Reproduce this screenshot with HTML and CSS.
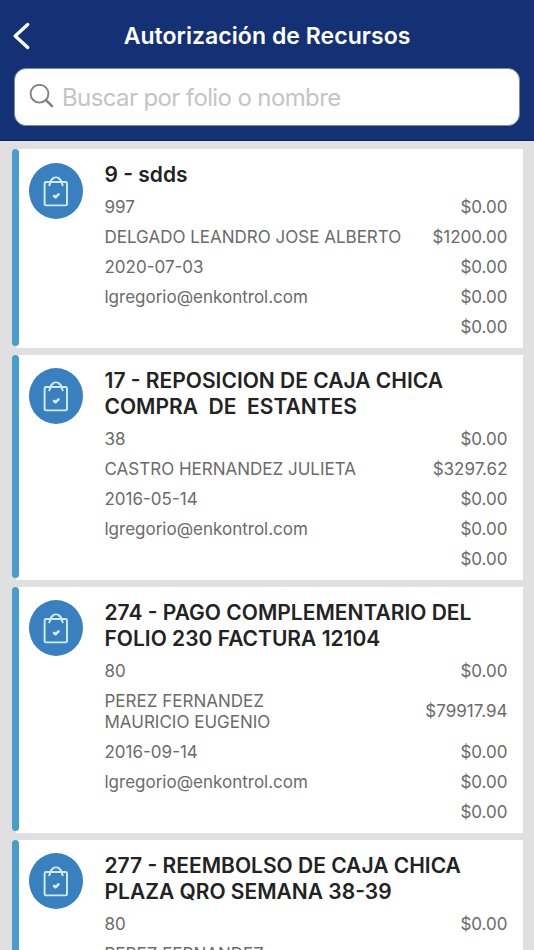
FILE: index.html
```html
<!DOCTYPE html>
<html lang="es">
<head>
    <meta charset="UTF-8">
    <meta name="viewport" content="width=device-width, initial-scale=1.0">
    <title>Autorización de Recursos</title>
    <link rel="stylesheet" href="styles.css">
</head>
<body>
    <svg class="sprite" width="0" height="0">
        <symbol id="bag" viewBox="0 0 54 56">
            <ellipse cx="27" cy="28" rx="27" ry="28" fill="#3880c0"/>
            <g fill="none" stroke="#d3ecfb" stroke-width="1.9" stroke-linejoin="round" stroke-linecap="round">
                <rect x="15.6" y="19" width="22.4" height="23.4" rx="1.5"/>
                <path d="M20.3 22.3l1.7-4.6q.5-1.3 1.7-1.7c.5-2.2 6.1-2.2 6.600 0q1.200.4 1.700 1.700l1.700 4.600"/>
                <path d="M25 33l1.500 1.300 3-3" stroke-width="2.600"/>
            </g>
        </symbol>
    </svg>

    <header class="header">
        <div class="navbar">
            <svg class="back" width="18" height="30" viewBox="0 0 18 30">
                <path d="M14.700 3.500L2.200 15l12.500 11.500" fill="none" stroke="#fff" stroke-width="3.300" stroke-linecap="round" stroke-linejoin="round"/>
            </svg>
            <h1>Autorización de Recursos</h1>
        </div>
        <label class="search">
            <svg width="26" height="26" viewBox="0 0 26 26" fill="none" stroke="#808285">
                <circle cx="10.500" cy="9.700" r="8.900" stroke-width="1.900"/>
                <path d="M17 16.200l6 6" stroke-width="2.600" stroke-linecap="round"/>
            </svg>
            <input type="text" placeholder="Buscar por folio o nombre">
        </label>
    </header>

    <main class="list">
        <article class="card">
            <svg class="icon"><use href="#bag"/></svg>
            <div class="info">
                <h2>9 - sdds</h2>
                <div class="row"><span>997</span><span>$0.00</span></div>
                <div class="row"><span>DELGADO LEANDRO JOSE ALBERTO</span><span>$1200.00</span></div>
                <div class="row"><span>2020-07-03</span><span>$0.00</span></div>
                <div class="row"><span>lgregorio@enkontrol.com</span><span>$0.00</span></div>
                <div class="row"><span></span><span>$0.00</span></div>
            </div>
        </article>
        <article class="card">
            <svg class="icon"><use href="#bag"/></svg>
            <div class="info">
                <h2>17 - REPOSICION DE CAJA CHICA
COMPRA  DE  ESTANTES</h2>
                <div class="row"><span>38</span><span>$0.00</span></div>
                <div class="row"><span>CASTRO HERNANDEZ JULIETA</span><span>$3297.62</span></div>
                <div class="row"><span>2016-05-14</span><span>$0.00</span></div>
                <div class="row"><span>lgregorio@enkontrol.com</span><span>$0.00</span></div>
                <div class="row"><span></span><span>$0.00</span></div>
            </div>
        </article>
        <article class="card">
            <svg class="icon"><use href="#bag"/></svg>
            <div class="info">
                <h2>274 - PAGO COMPLEMENTARIO DEL
FOLIO 230 FACTURA 12104</h2>
                <div class="row"><span>80</span><span>$0.00</span></div>
                <div class="row"><span>PEREZ FERNANDEZ<br>MAURICIO EUGENIO</span><span>$79917.94</span></div>
                <div class="row"><span>2016-09-14</span><span>$0.00</span></div>
                <div class="row"><span>lgregorio@enkontrol.com</span><span>$0.00</span></div>
                <div class="row"><span></span><span>$0.00</span></div>
            </div>
        </article>
        <article class="card">
            <svg class="icon"><use href="#bag"/></svg>
            <div class="info">
                <h2>277 - REEMBOLSO DE CAJA CHICA
PLAZA QRO SEMANA 38-39</h2>
                <div class="row"><span>80</span><span>$0.00</span></div>
                <div class="row"><span>PEREZ FERNANDEZ</span></div>
            </div>
        </article>
    </main>
</body>
</html>
```
FILE: styles.css
```css
* {
    box-sizing: border-box;
}
body {
    margin: 0;
    height: 950px;
    overflow: hidden;
    background: #e0e0e0;
    font-family: Inter, "Liberation Sans", sans-serif;
}
.sprite {
    display: block;
}
.header {
    height: 141px;
    padding: 0 14px;
    background: #133174;
    border-bottom: 1px solid #10205f;
}
.navbar {
    display: grid;
    grid-template-columns: 18px 1fr 18px;
    align-items: center;
    height: 68px;
    padding-top: 4px;
}
.back {
    margin-left: -1px;
}
h1 {
    margin: 0;
    text-align: center;
    color: #fff;
    font-size: 23px;
    font-weight: 600;
    letter-spacing: 0.05px;
}
.search {
    display: flex;
    align-items: center;
    gap: 7px;
    height: 58px;
    padding: 0 14px;
    background: #fff;
    border: 1px solid #8087a0;
    border-radius: 12px;
}
.search input {
    flex: 1;
    min-width: 0;
    padding: 0;
    border: 0;
    outline: 0;
    font-family: inherit;
    font-size: 24px;
    letter-spacing: -0.62px;
}
.search input::placeholder {
    color: #c4c4c6;
}
.list {
    display: flex;
    flex-direction: column;
    gap: 7px;
    height: 809px;
    padding: 8.4px 11.5px 0;
    overflow: hidden;
}
.card {
    display: flex;
    flex-shrink: 0;
    background: linear-gradient(#fff, #fff) 4px 0 no-repeat;
    padding: 0 15px 5.5px 0;
}
.card::before {
    content: "";
    width: 7.5px;
    margin-bottom: -3.8px;
    background: #479ecd;
    border-radius: 4px;
}
.icon {
    width: 54px;
    height: 56px;
    margin: 13.2px 22px 0 9.5px;
}
.info {
    flex: 1;
    padding-top: 13px;
}
h2 {
    margin: 0 0 4.2px;
    color: #232323;
    font-size: 21px;
    font-weight: 600;
    line-height: 26.1px;
    white-space: pre;
}
.row {
    display: flex;
    justify-content: space-between;
    align-items: center;
    min-height: 30px;
    padding: 4.6px 0;
    color: #6b6b6b;
    font-size: 17px;
    line-height: 20.8px;
}
```
